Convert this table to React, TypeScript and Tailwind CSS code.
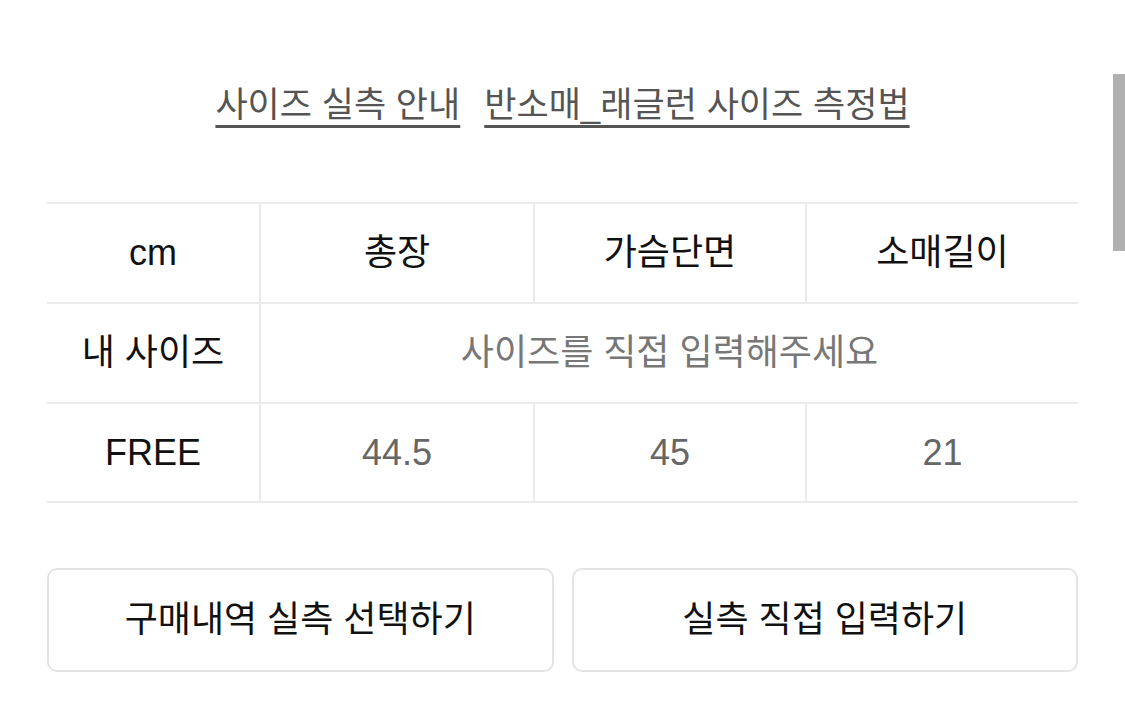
const rows = [
  { label: 'FREE', values: ['44.5', '45', '21'] },
];

const App = () => {
  return (
    <div
      className="relative w-[1125px] h-[721px] overflow-hidden bg-white"
      style={{ fontFamily: '"Liberation Sans", "Noto Sans CJK KR", sans-serif' }}
    >
      <div className="px-[47px]">
        <div className="flex justify-center gap-[24px] pt-[80px] h-[202px] text-[35px] text-[#555] leading-[50px]">
          <span className="underline decoration-[3px] underline-offset-[8px] decoration-[#555]">
            사이즈 실측 안내
          </span>
          <span className="underline decoration-[3px] underline-offset-[8px] decoration-[#555]">
            반소매_래글런 사이즈 측정법
          </span>
        </div>

        <div className="border-t-2 border-[#ebebeb] text-[36px]">
          <div className="grid grid-cols-[212px_274px_272px_1fr] h-[100px] border-b-2 border-[#ebebeb] text-[#111]">
            <div className="flex items-center justify-center">cm</div>
            <div className="flex items-center justify-center border-l-2 border-[#ebebeb]">총장</div>
            <div className="flex items-center justify-center border-l-2 border-[#ebebeb]">가슴단면</div>
            <div className="flex items-center justify-center border-l-2 border-[#ebebeb]">소매길이</div>
          </div>
          <div className="grid grid-cols-[212px_1fr] h-[100px] border-b-2 border-[#ebebeb]">
            <div className="flex items-center justify-center text-[#111]">내 사이즈</div>
            <div className="flex items-center justify-center border-l-2 border-[#ebebeb] text-[#777]">
              사이즈를 직접 입력해주세요
            </div>
          </div>
          {rows.map((r) => (
            <div
              key={r.label}
              className="grid grid-cols-[212px_274px_272px_1fr] h-[99px] border-b-2 border-[#ebebeb]"
            >
              <div className="flex items-center justify-center text-[#111]">{r.label}</div>
              {r.values.map((v) => (
                <div
                  key={v}
                  className="flex items-center justify-center border-l-2 border-[#ebebeb] text-[#666]"
                >
                  {v}
                </div>
              ))}
            </div>
          ))}
        </div>

        <div className="flex gap-[18px] mt-[65px]">
          <button className="flex-1 h-[104px] rounded-[10px] border-2 border-[#e4e4e4] bg-white text-[36px] text-[#111]">
            구매내역 실측 선택하기
          </button>
          <button className="flex-1 h-[104px] rounded-[10px] border-2 border-[#e4e4e4] bg-white text-[36px] text-[#111]">
            실측 직접 입력하기
          </button>
        </div>
      </div>

      <div className="absolute right-0 top-[74px] w-[12px] h-[177px] bg-[#b0b0b0]" />
    </div>
  );
};

export default App;
